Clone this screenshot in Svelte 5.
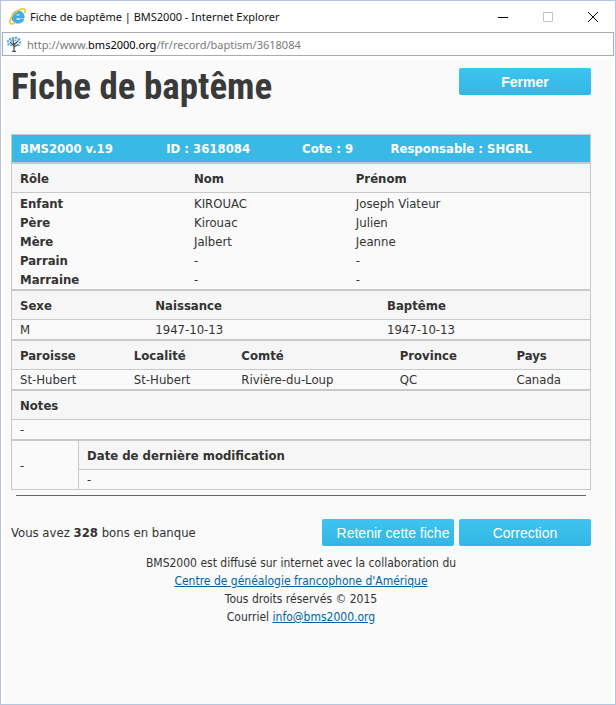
<script>
    //* record shown in the window
    const header = {
        cols: [25.3, 23.5, 15.3, 35.9],
        cells: ['BMS2000 v.19', 'ID : 3618084', 'Cote : 9', 'Responsable : SHGRL'],
    };

    const people = {
        cols: [30.1, 28, 41.9],
        heads: ['Rôle', 'Nom', 'Prénom'],
        rows: [
            ['Enfant', 'KIROUAC', 'Joseph Viateur'],
            ['Père', 'Kirouac', 'Julien'],
            ['Mère', 'Jalbert', 'Jeanne'],
            ['Parrain', '-', '-'],
            ['Marraine', '-', '-'],
        ],
    };

    const details = [
        {
            cols: [23.4, 40.1, 36.5],
            heads: ['Sexe', 'Naissance', 'Baptême'],
            cells: ['M', '1947-10-13', '1947-10-13'],
        },
        {
            cols: [19.7, 18.6, 27.4, 20.2, 14.1],
            heads: ['Paroisse', 'Localité', 'Comté', 'Province', 'Pays'],
            cells: ['St-Hubert', 'St-Hubert', 'Rivière-du-Loup', 'QC', 'Canada'],
        },
        {
            cols: [100],
            heads: ['Notes'],
            cells: ['-'],
        },
    ];

    const credits = 328;
</script>

{#snippet widths(cols)}
    <colgroup>
        {#each cols as width}
            <col style="width: {width}%">
        {/each}
    </colgroup>
{/snippet}

<div class="window">
    <header class="title-bar">
        <svg class="app-icon" viewBox="0 0 16 16" aria-hidden="true">
            <path d="M8.600 2.800C5.200 2.800 2.600 5.300 2.600 8.600s2.500 5.700 6 5.700c2.700 0 4.700-1.300 5.400-3.600h-3.500c-.4.600-1 .9-1.900.9-1.300 0-2.200-.8-2.300-2.100h8c.3-3.900-2-6.700-5.700-6.700zM6.400 7.300c.2-1.100 1-1.800 2.100-1.800s1.900.7 2 1.800z" fill="#45aeea" fill-rule="evenodd" stroke="#2180c8" stroke-width=".5"/>
            <path d="M1.400 14.600C-.6 12.600 3 6.300 7.600 3 11.300.3 15 0 15.200 2.300c.1.700-.1 1.300-.4 2M1.400 14.600c1 .7 2.800.2 4.300-.9" fill="none" stroke="#f2c51c" stroke-width="1.400" stroke-linecap="round"/>
        </svg>
        <span class="title">Fiche de baptême | BMS2000 - Internet Explorer</span>
        <div class="window-controls">
            <button type="button" aria-label="Réduire">
                <svg viewBox="0 0 10 10"><path d="M0 5.500h10"/></svg>
            </button>
            <button type="button" aria-label="Agrandir" disabled>
                <svg viewBox="0 0 10 10"><path d="M.5.5h9v9h-9z"/></svg>
            </button>
            <button type="button" aria-label="Fermer la fenêtre">
                <svg viewBox="0 0 10 10"><path d="M0 0l10 10M10 0L0 10"/></svg>
            </button>
        </div>
    </header>

    <div class="address-bar">
        <svg class="site-icon" viewBox="0 0 16 16" aria-hidden="true">
            <path d="M8 15V7M8 10L4 6M8 9l4-4M8 11l4-2.500M7.500 8L7 3M6 15.300h4" fill="none" stroke="#4c4c50" stroke-width="1.200"/>
            <g fill="#58b4dc">
                <circle cx="7" cy="2" r="1.300"/>
                <circle cx="10" cy="1.800" r="1.200"/>
                <circle cx="4" cy="3" r="1.300"/>
                <circle cx="12.800" cy="3.500" r="1.400"/>
                <circle cx="2" cy="5.200" r="1.200"/>
                <circle cx="5.200" cy="5" r=".9"/>
                <circle cx="9.500" cy="4.600" r="1"/>
                <circle cx="14" cy="6.500" r="1.200"/>
                <circle cx="2.500" cy="8.200" r="1.200"/>
                <circle cx="5" cy="9.200" r=".9"/>
                <circle cx="12.600" cy="9" r="1.200"/>
            </g>
        </svg>
        <span class="url">http://www.<b>bms2000.org</b>/fr/record/baptism/3618084</span>
    </div>

    <main>
        <div class="heading">
            <h1>Fiche de baptême</h1>
            <button type="button" class="btn close">Fermer</button>
        </div>

        <table class="banner">
            {@render widths(header.cols)}
            <tbody>
                <tr>
                    {#each header.cells as cell}
                        <th>{cell}</th>
                    {/each}
                </tr>
            </tbody>
        </table>

        <table class="people">
            {@render widths(people.cols)}
            <thead>
                <tr>
                    {#each people.heads as head}
                        <th scope="col">{head}</th>
                    {/each}
                </tr>
            </thead>
            <tbody>
                {#each people.rows as [role, name, firstName]}
                    <tr>
                        <th scope="row">{role}</th>
                        <td>{name}</td>
                        <td>{firstName}</td>
                    </tr>
                {/each}
            </tbody>
        </table>

        {#each details as block}
            <table>
                {@render widths(block.cols)}
                <thead>
                    <tr>
                        {#each block.heads as head}
                            <th scope="col">{head}</th>
                        {/each}
                    </tr>
                </thead>
                <tbody>
                    <tr>
                        {#each block.cells as cell}
                            <td>{cell}</td>
                        {/each}
                    </tr>
                </tbody>
            </table>
        {/each}

        <table>
            {@render widths([11.6, 88.4])}
            <thead>
                <tr>
                    <td rowspan="2" class="side">-</td>
                    <th scope="col">Date de dernière modification</th>
                </tr>
                <tr>
                    <td>-</td>
                </tr>
            </thead>
        </table>

        <hr>

        <div class="actions">
            <p>Vous avez <strong>{credits}</strong> bons en banque</p>
            <button type="button" class="btn keep">Retenir cette fiche</button>
            <button type="button" class="btn">Correction</button>
        </div>

        <footer>
            BMS2000 est diffusé sur internet avec la collaboration du<br>
            <a href="#centre">Centre de généalogie francophone d'Amérique</a><br>
            Tous droits réservés © 2015<br>
            Courriel <a href="mailto:info@bms2000.org">info@bms2000.org</a>
        </footer>
    </main>
</div>

<style>
    .window {
        display: flex;
        flex-direction: column;
        box-sizing: border-box;
        min-height: 100vh;
        border: 1px solid #b3c5e0;
        background-color: #fff;
        color: #333;
        font-family: "DejaVu Sans Condensed", "Noto Sans", sans-serif;
        font-size: 13px;
    }

    .title-bar {
        display: flex;
        align-items: center;
        height: 31px;
        padding-left: 8px;
        color: #111;
        font-family: "Noto Sans", sans-serif;
        font-size: 11px;
    }

    .app-icon {
        width: 17px;
        height: 17px;
        margin-right: 4px;
    }

    .title {
        flex: 1;
        white-space: nowrap;
    }

    .window-controls {
        display: flex;
    }

    .window-controls button {
        display: grid;
        place-items: center;
        width: 45px;
        height: 30px;
        padding: 0;
        border: 0;
        background: none;
    }

    .window-controls svg {
        width: 10px;
        height: 10px;
        fill: none;
        stroke: #000;
        stroke-width: 1;
    }

    .window-controls button:disabled svg {
        stroke: #c4c4c8;
    }

    .address-bar {
        display: flex;
        align-items: center;
        height: 22px;
        margin: 0 1px;
        padding-left: 3px;
        border: 1px solid #a9acb4;
        font-family: "Noto Sans", sans-serif;
        font-size: 11px;
    }

    .site-icon {
        width: 16px;
        height: 16px;
        margin-right: 5px;
    }

    .url {
        color: #7a7a7a;
    }

    .url b {
        color: #000;
        font-weight: normal;
    }

    main {
        flex: 1;
        margin: 4px 4px 0 4px;
        padding: 0 20px 0 6px;
        background-color: #fafafa;
    }

    .heading {
        display: flex;
        justify-content: space-between;
        align-items: flex-start;
        height: 66px;
        padding-top: 8px;
    }

    h1 {
        margin: 0;
        color: #3a3a3a;
        font-family: "Roboto Condensed", "Open Sans Condensed", sans-serif;
        font-size: 37px;
        font-weight: bold;
        line-height: 38px;
        white-space: nowrap;
    }

    .btn {
        width: 132px;
        height: 27px;
        padding: 0;
        border: 0;
        border-radius: 2px;
        background: linear-gradient(#3dc4ef, #34b6e4);
        color: #fff;
        font-family: "Liberation Sans", Arial, sans-serif;
        font-size: 14px;
        white-space: nowrap;
    }

    .close {
        font-weight: bold;
    }

    .keep {
        padding-left: 10px;
    }

    table {
        width: 100%;
        table-layout: fixed;
        border: 1px solid #c9c9c9;
        border-spacing: 0;
    }

    th,
    td {
        height: 19px;
        padding: 0 0 0 8px;
        line-height: 19px;
        text-align: left;
        white-space: nowrap;
    }

    thead th {
        height: 28px;
        border-bottom: 1px solid #c9c9c9;
        background-color: #f6f6f6;
    }

    .banner th {
        height: 27px;
        background-color: #38b9e6;
        color: #fff;
    }

    .people tbody tr:first-child > * {
        padding-top: 1px;
    }

    .side {
        border-right: 1px solid #c9c9c9;
    }

    hr {
        height: 1px;
        margin: 5px 5px 0;
        border: 0;
        background-color: #666;
    }

    .actions {
        display: flex;
        align-items: center;
        gap: 5px;
        margin-top: 23px;
    }

    .actions p {
        flex: 1;
        margin: 0;
    }

    footer {
        padding: 8px 0 16px;
        font-size: 12px;
        line-height: 18px;
        text-align: center;
    }

    footer a {
        color: #0064a4;
    }
</style>
